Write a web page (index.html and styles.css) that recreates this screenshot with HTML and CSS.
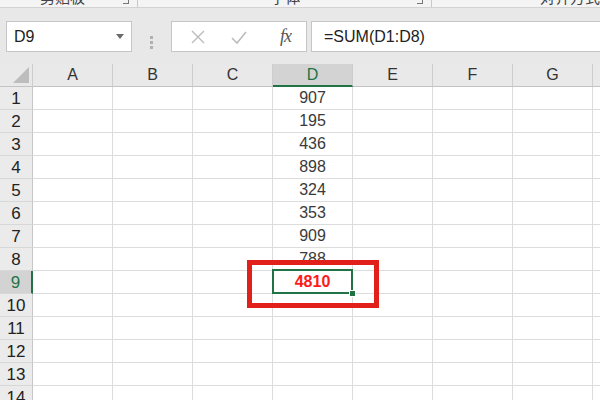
FILE: index.html
```html
<!DOCTYPE html>
<html lang="zh-CN">

<head>
    <meta charset="UTF-8" />
    <title>SUM</title>
    <link rel="stylesheet" href="styles.css">
</head>

<body>

    <div class="ribbon">
        <div class="grp g1"><span class="lbl">剪贴板</span><span class="launch"></span></div>
        <div class="grp g2"><span class="lbl">字体</span><span class="launch"></span></div>
        <div class="grp g3"><span class="lbl">对齐方式</span></div>
    </div>

    <div class="fbar">
        <div class="namebox">
            <span>D9</span>
            <svg class="drop" width="8" height="5" viewBox="0 0 8 5"><path d="M0 0H8L4 5Z" fill="#6b6b6b"/></svg>
        </div>
        <div class="grip"><i></i><i></i><i></i></div>
        <div class="tools">
            <svg width="16" height="16" viewBox="0 0 16 16"><path d="M2 2L14 14M14 2L2 14" stroke="#bcbcbc" stroke-width="1.4"/></svg>
            <svg width="18" height="16" viewBox="0 0 18 16"><path d="M2 9L7 14L16 3" stroke="#bcbcbc" stroke-width="1.6" fill="none"/></svg>
            <span class="fx">fx</span>
        </div>
        <div class="formula">=SUM(D1:D8)</div>
    </div>

    <div class="sheet">
        <div class="hd corner"><svg width="16" height="16" viewBox="0 0 16 16"><path d="M16 0V16H0Z" fill="#bdbdbd"/></svg></div>
        <div class="hd">A</div><div class="hd">B</div><div class="hd">C</div><div class="hd sel">D</div>
        <div class="hd">E</div><div class="hd">F</div><div class="hd">G</div><div class="hd"></div>

        <div class="rh">1</div><div class="c"></div><div class="c"></div><div class="c"></div><div class="c">907</div><div class="c"></div><div class="c"></div><div class="c"></div><div class="c"></div>
        <div class="rh">2</div><div class="c"></div><div class="c"></div><div class="c"></div><div class="c">195</div><div class="c"></div><div class="c"></div><div class="c"></div><div class="c"></div>
        <div class="rh">3</div><div class="c"></div><div class="c"></div><div class="c"></div><div class="c">436</div><div class="c"></div><div class="c"></div><div class="c"></div><div class="c"></div>
        <div class="rh">4</div><div class="c"></div><div class="c"></div><div class="c"></div><div class="c">898</div><div class="c"></div><div class="c"></div><div class="c"></div><div class="c"></div>
        <div class="rh">5</div><div class="c"></div><div class="c"></div><div class="c"></div><div class="c">324</div><div class="c"></div><div class="c"></div><div class="c"></div><div class="c"></div>
        <div class="rh">6</div><div class="c"></div><div class="c"></div><div class="c"></div><div class="c">353</div><div class="c"></div><div class="c"></div><div class="c"></div><div class="c"></div>
        <div class="rh">7</div><div class="c"></div><div class="c"></div><div class="c"></div><div class="c">909</div><div class="c"></div><div class="c"></div><div class="c"></div><div class="c"></div>
        <div class="rh">8</div><div class="c"></div><div class="c"></div><div class="c"></div><div class="c">788</div><div class="c"></div><div class="c"></div><div class="c"></div><div class="c"></div>
        <div class="rh sel">9</div><div class="c"></div><div class="c"></div><div class="c"></div><div class="c active total">4810<span class="mark"></span></div><div class="c"></div><div class="c"></div><div class="c"></div><div class="c"></div>
        <div class="rh">10</div><div class="c"></div><div class="c"></div><div class="c"></div><div class="c"></div><div class="c"></div><div class="c"></div><div class="c"></div><div class="c"></div>
        <div class="rh">11</div><div class="c"></div><div class="c"></div><div class="c"></div><div class="c"></div><div class="c"></div><div class="c"></div><div class="c"></div><div class="c"></div>
        <div class="rh">12</div><div class="c"></div><div class="c"></div><div class="c"></div><div class="c"></div><div class="c"></div><div class="c"></div><div class="c"></div><div class="c"></div>
        <div class="rh">13</div><div class="c"></div><div class="c"></div><div class="c"></div><div class="c"></div><div class="c"></div><div class="c"></div><div class="c"></div><div class="c"></div>
        <div class="rh">14</div><div class="c"></div><div class="c"></div><div class="c"></div><div class="c"></div><div class="c"></div><div class="c"></div><div class="c"></div><div class="c"></div>
    </div>

</body>

</html>
```

FILE: styles.css
```css
html,
body {
    margin: 0;
    padding: 0;
}

body {
    width: 600px;
    height: 400px;
    overflow: hidden;
    background: #e8e8e8;
    font-family: "Liberation Sans", Arial, sans-serif;
    color: #333;
}

/* ribbon strip, only the bottom of the labels shows */
.ribbon {
    display: flex;
    height: 7px;
    background: #f4f4f4;
    border-bottom: 1px solid #d3d3d3;
    overflow: hidden;
}

.grp {
    position: relative;
    display: flex;
    border-right: 1px solid #c9c9c9;
    box-sizing: border-box;
}

.g1 {
    width: 153px;
    padding-left: 40px;
}

.g2 {
    width: 318px;
    padding-left: 132px;
}

.g3 {
    flex: 1;
    padding-left: 108px;
    border-right: none;
}

.lbl {
    font-family: "Noto Sans CJK SC", sans-serif;
    font-size: 15px;
    line-height: 18px;
    margin-top: -12px;
    color: #444;
    white-space: nowrap;
}

.launch {
    position: absolute;
    right: 8px;
    top: -2px;
    width: 5px;
    height: 5px;
    border-right: 1px solid #777;
    border-bottom: 1px solid #777;
}

/* formula bar */
.fbar {
    display: flex;
    height: 56px;
    padding-top: 13px;
    box-sizing: border-box;
}

.namebox,
.tools,
.formula {
    height: 31px;
    background: #fff;
    border: 1px solid #c6c6c6;
    box-sizing: border-box;
    display: flex;
    align-items: center;
}

.namebox {
    margin-left: 6px;
    width: 126px;
    padding: 0 7px;
    justify-content: space-between;
    font-size: 16px;
    color: #222;
}

.grip {
    width: 39px;
    display: flex;
    flex-direction: column;
    align-items: center;
    justify-content: center;
    gap: 2px;
}

.grip i {
    width: 3px;
    height: 3px;
    background: #b0b0b0;
}

.tools {
    width: 136px;
    padding-left: 18px;
    gap: 24px;
}

.fx {
    margin-left: 8px;
    font-family: "Liberation Serif", serif;
    font-style: italic;
    font-size: 18px;
    color: #555;
    letter-spacing: -1px;
}

.formula {
    flex: 1;
    margin-left: 4px;
    margin-right: -4px;
    padding-left: 12px;
    font-size: 16px;
    color: #222;
}

/* sheet grid */
.sheet {
    display: grid;
    grid-template-columns: 33px repeat(8, 80px);
    grid-auto-rows: 23px;
    background: #fff;
}

.hd,
.rh,
.c {
    box-sizing: border-box;
    text-align: center;
    line-height: 22px;
}

.hd {
    background: #e9e9e9;
    border-right: 1px solid #cdcdcd;
    border-bottom: 1px solid #c3c3c3;
    font-size: 16px;
    color: #333;
}

.hd.sel {
    background: #d3d3d3;
    color: #217346;
    border-bottom: 2px solid #217346;
}

.corner {
    display: flex;
    align-items: flex-end;
    justify-content: flex-end;
    padding: 0 3px 3px 0;
}

.rh {
    background: #ebebeb;
    border-right: 1px solid #c6c6c6;
    border-bottom: 1px solid #d8d8d8;
    font-size: 17px;
    line-height: 23px;
    color: #222;
}

.rh.sel {
    background: #d3d3d3;
    color: #217346;
    border-right: 2px solid #217346;
}

.c {
    border-right: 1px solid #dcdcdc;
    border-bottom: 1px solid #dcdcdc;
    font-size: 16px;
    color: #3a3a3a;
}

.total {
    color: #ff1a1a;
    font-weight: bold;
}

.active {
    position: relative;
}

.active::before {
    content: "";
    position: absolute;
    top: -2px;
    left: -1px;
    right: -1px;
    bottom: -1px;
    border: 2px solid #217346;
}

.active::after {
    content: "";
    position: absolute;
    right: -4px;
    bottom: -4px;
    width: 5px;
    height: 5px;
    background: #217346;
    border: 1px solid #fff;
}

/* red annotation box */
.mark {
    position: absolute;
    left: -26px;
    top: -11px;
    width: 132px;
    height: 48px;
    border: 5px solid #e1201c;
    box-sizing: border-box;
    z-index: 2;
}
```
